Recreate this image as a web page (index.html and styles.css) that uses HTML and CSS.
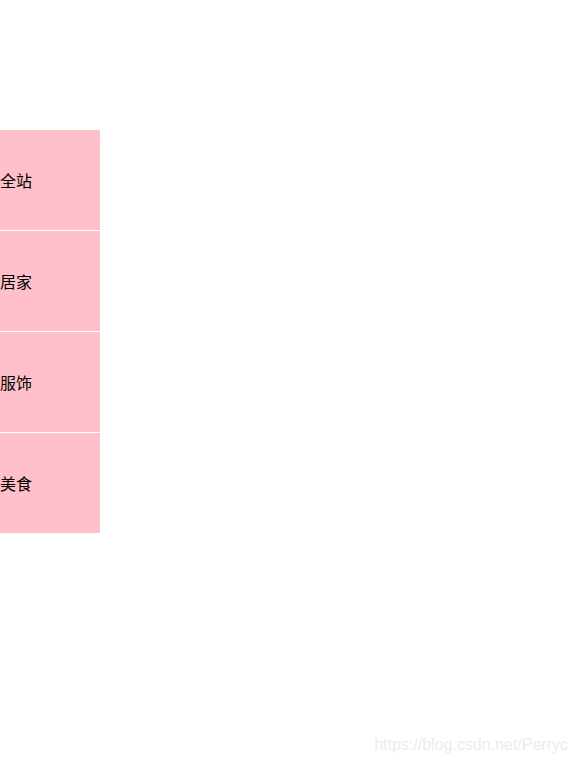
FILE: index.html
```html
<!DOCTYPE html>
<html lang="zh-CN">
<head>
<meta charset="utf-8">
<title>菜单</title>
<link rel="stylesheet" href="styles.css">
</head>
<body>
<ul class="menu">
  <li class="menu-item">全站</li>
  <li class="menu-item">居家</li>
  <li class="menu-item">服饰</li>
  <li class="menu-item">美食</li>
</ul>
<div class="watermark">https://blog.csdn.net/Perryc</div>
</body>
</html>
```

FILE: styles.css
```css
html, body {
  margin: 0;
  padding: 0;
  background: #fff;
}
body {
  width: 577px;
  height: 764px;
  position: relative;
  overflow: hidden;
  font-family: "Liberation Sans", "Noto Sans CJK SC", sans-serif;
  font-size: 16px;
  color: #000;
}
.menu {
  list-style: none;
  margin: 130px 0 0 0;
  padding: 0;
  width: 100px;
}
.menu-item {
  height: 100px;
  line-height: 100px;
  background: pink;
  border-bottom: 1px solid #fff;
  font-family: "Noto Sans CJK SC", sans-serif;
}
.watermark {
  position: absolute;
  right: 9px;
  bottom: 10px;
  color: #ececec;
  font-family: "Liberation Sans", sans-serif;
  font-size: 16px;
  line-height: 18px;
}
```
